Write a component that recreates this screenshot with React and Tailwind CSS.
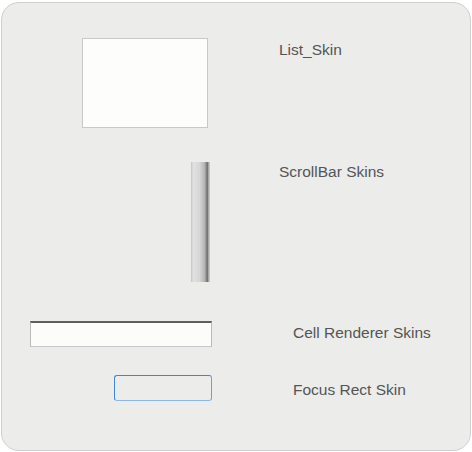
export default function App() {
  const font = { fontFamily: '"Liberation Sans", Arial, sans-serif' };
  return (
    <div className="w-[472px] h-[452px] bg-white pt-[2px] pl-[1px]" style={font}>
      <div className="w-[470px] h-[449px] rounded-[18px] border border-[#cfcfcf] bg-[#ececeb] relative text-[15.5px] leading-[17px] text-[#555555]">
        {/* Row 1 */}
        <div className="flex items-start pt-[35px]">
          <div className="w-[206px] flex justify-end">
            <div className="w-[126px] h-[90px] bg-[#fdfdfc] border border-[#c9c9c9]" />
          </div>
          <div className="ml-[71px] mt-[3px]">List_Skin</div>
        </div>
        {/* Row 2 */}
        <div className="flex items-start pt-[34px]">
          <div className="w-[208px] flex justify-end">
            <div
              className="w-[19px] h-[120px]"
              style={{
                background:
                  'linear-gradient(to right, #c4c4c4 0%, #e2e2e2 12%, #d6d6d6 45%, #b4b4b4 72%, #8a8a8a 80%, #6e6e6e 86%, #a6a6a6 92%, #d6d6d6 100%)',
              }}
            />
          </div>
          <div className="ml-[69px] mt-[1px]">ScrollBar Skins</div>
        </div>
        {/* Row 3 */}
        <div className="flex items-start pt-[39px]">
          <div className="w-[210px] flex justify-end">
            <div className="w-[182px] h-[26px] bg-[#fcfcfb] border border-[#b9b9b9] border-t-[2px] border-t-[#5e5e5e] border-b-[#c4c8cc]" />
          </div>
          <div className="ml-[81px] mt-[3px]">Cell Renderer Skins</div>
        </div>
        {/* Row 4 */}
        <div className="flex items-start pt-[28px]">
          <div className="w-[210px] flex justify-end">
            <div className="w-[98px] h-[26px] rounded-[3px] border border-[#3d89cf] border-b-[#8db8e2] border-r-[#6aa3d8]" />
          </div>
          <div className="ml-[81px] mt-[6px]">Focus Rect Skin</div>
        </div>
      </div>
    </div>
  );
}
